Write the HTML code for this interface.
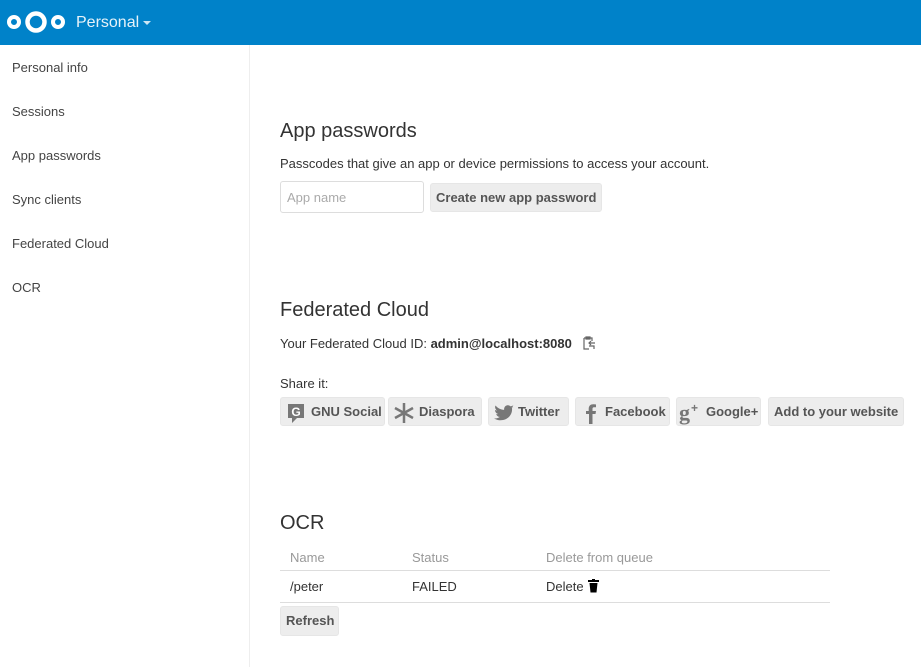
<!DOCTYPE html><html><head><style>
body{margin:0;width:921px;height:667px;overflow:hidden;font-family:"Liberation Sans",sans-serif;font-size:13px;color:#333;background:#fff;position:relative}
.hdr{position:absolute;left:0;top:0;width:921px;height:45px;background:#0082c9}
.side{position:absolute;left:0;top:45px;width:249px;height:622px;border-right:1px solid #eee}
.side div{position:absolute;left:12px;color:#444;font-size:13px}
.a{position:absolute;white-space:nowrap}
h2{position:absolute;margin:0;font-weight:normal;font-size:20px;color:#333}
.btn{position:absolute;background:#ededed;border:1px solid #e6e6e6;border-radius:3px;height:29px;box-sizing:border-box;font-weight:bold;color:#555;font-size:13px;line-height:27px;white-space:nowrap}
.btn svg{position:absolute;top:4px}
.gray{color:#999}
.line{position:absolute;left:280px;width:550px;height:1px;background:#ddd}
</style></head><body>
<div class="hdr">
<svg width="62" height="45" style="position:absolute;left:6px;top:0">
<circle cx="8" cy="22" r="5" fill="none" stroke="#fff" stroke-width="4"/>
<circle cx="30" cy="22" r="8.5" fill="none" stroke="#fff" stroke-width="4.5"/>
<circle cx="52" cy="22" r="5" fill="none" stroke="#fff" stroke-width="4"/></svg>
<div class="a" style="left:76px;top:14px;color:#fff;font-size:16px;opacity:.9">Personal</div>
<div class="a" style="left:143px;top:21px;width:0;height:0;border-left:4px solid transparent;border-right:4px solid transparent;border-top:4px solid #fff;opacity:.8"></div>
</div>
<div class="side">
<div style="top:15px">Personal info</div>
<div style="top:59px">Sessions</div>
<div style="top:103px">App passwords</div>
<div style="top:147px">Sync clients</div>
<div style="top:191px">Federated Cloud</div>
<div style="top:235px">OCR</div>
</div>
<h2 style="left:280px;top:120px">App passwords</h2>
<div class="a" style="left:280px;top:156px">Passcodes that give an app or device permissions to access your account.</div>
<div class="a" style="left:280px;top:181px;width:144px;height:32px;border:1px solid #ddd;border-radius:3px;box-sizing:border-box;color:#aaa;padding:8px 6px">App name</div>
<div class="btn" style="left:430px;top:183px;padding:0 5px">Create new app password</div>
<h2 style="left:280px;top:299px">Federated Cloud</h2>
<div class="a" style="left:280px;top:336px">Your Federated Cloud ID: <b>admin@localhost:8080</b></div>
<svg class="a" style="left:582px;top:336px" width="14" height="14"><path d="M2 2h8v3M2 2v11h5M4 1h4v2H4z M7 7h6M9 5l-2 2 2 2M7 10h5v3" fill="none" stroke="#666" stroke-width="1.2"/></svg>
<div class="a" style="left:280px;top:376px">Share it:</div>
<div class="btn" style="left:280px;top:397px;width:105px;padding-left:30px"><svg style="left:4px" width="22" height="22"><path d="M3 2h16v14h-7l-5 5v-5H3z" fill="#777"/><text x="11" y="14" font-size="12" font-weight="bold" fill="#fff" text-anchor="middle" font-family="Liberation Sans">G</text></svg>GNU Social</div>
<div class="btn" style="left:388px;top:397px;width:94px;padding-left:30px"><svg style="left:4px" width="22" height="22"><path d="M11 1v20M2 6l18 10M2 16l18-10" stroke="#777" stroke-width="2.5"/></svg>Diaspora</div>
<div class="btn" style="left:488px;top:397px;width:81px;padding-left:29px"><svg style="left:4px" width="22" height="22"><path d="M21 5c-1 .5-2 .6-2.5.7 1-.6 1.5-1.5 1.8-2.3-1 .5-1.8.8-2.7 1-2-2-6-1.5-6.5 2.5v1C8 7.8 4.5 6 2.5 3.5c-1 2 0 4 1.5 5-.7 0-1.3-.2-2-.5 0 2 1.5 3.6 3.2 4-.6.2-1.3.2-2 .1.5 1.6 2 2.8 3.7 2.8C5.5 16 3.5 16.7 1 16.5c9 5 19-1 18-10.5.8-.4 1.5-.8 2-1z" fill="#777"/></svg>Twitter</div>
<div class="btn" style="left:575px;top:397px;width:95px;padding-left:29px"><svg style="left:4px" width="22" height="22"><path d="M12.5 22V12h3l.5-3h-3.5V7c0-1 .3-1.7 1.8-1.7H16V2.5c-.4 0-1.5-.2-2.8-.2-2.7 0-4.5 1.6-4.5 4.6V9H6v3h3v10z" fill="#777"/></svg>Facebook</div>
<div class="btn" style="left:676px;top:397px;width:85px;padding-left:29px"><svg style="left:2px" width="26" height="24"><text x="0" y="18" font-size="22" fill="#777" font-family="Liberation Serif">g</text><text x="12" y="10" font-size="12" fill="#777" font-family="Liberation Sans">+</text></svg>Google+</div>
<div class="btn" style="left:768px;top:397px;width:136px;padding-left:5px">Add to your website</div>
<h2 style="left:280px;top:512px">OCR</h2>
<div class="a gray" style="left:290px;top:550px">Name</div>
<div class="a gray" style="left:412px;top:550px">Status</div>
<div class="a gray" style="left:546px;top:550px">Delete from queue</div>
<div class="line" style="top:570px"></div>
<div class="a" style="left:290px;top:579px">/peter</div>
<div class="a" style="left:412px;top:579px">FAILED</div>
<div class="a" style="left:546px;top:579px">Delete</div>
<svg class="a" style="left:588px;top:579px" width="12" height="14"><rect x="0" y="1" width="11" height="2" fill="#000"/><rect x="4" y="0" width="3" height="2" fill="#000"/><path d="M1.5 4h8l-1 9.5h-6z" fill="#000"/></svg>
<div class="line" style="top:602px"></div>
<div class="btn" style="left:280px;top:606px;width:59px;height:30px;padding-left:5px;line-height:28px">Refresh</div>
</body></html>
